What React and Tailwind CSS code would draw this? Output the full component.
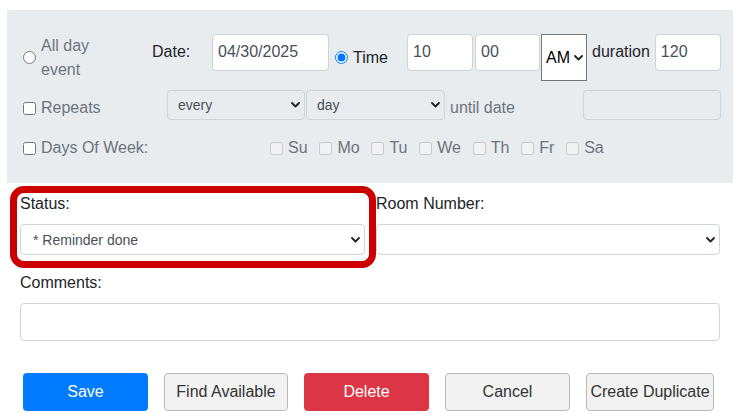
import React from "react";

function Chevron({ className }) {
  return (
    <svg
      className={"pointer-events-none absolute top-1/2 -translate-y-1/2 " + className}
      width="9"
      height="6"
      viewBox="0 0 9 6"
    >
      <path d="M1 1L4.5 4.5L8 1" fill="none" stroke="#222" strokeWidth="1.8" strokeLinecap="round" strokeLinejoin="round" />
    </svg>
  );
}

function Day({ label }) {
  return (
    <label className="flex items-center gap-[5px] text-[#6c757d]">
      <input type="checkbox" disabled className="m-0 h-[13px] w-[13px]" />
      <span>{label}</span>
    </label>
  );
}

export default function App() {
  return (
    <div className="min-h-screen bg-white font-['Liberation_Sans',Arial,sans-serif] text-[16px] leading-[24px] text-[#212529]">
      <div className="ml-[7px] mt-[10px] h-[173px] w-[726px] bg-[#e9ecef] pl-[16px] pt-[24px]">
        {/* Row 1 */}
        <div className="flex h-[47px] items-center">
          <div className="flex w-[129px] items-center">
            <input type="radio" name="when" className="m-0 h-[13px] w-[13px]" />
            <span className="ml-[5px] w-[70px] text-[#6c757d]">All day event</span>
          </div>
          <span className="mt-[6px] w-[60px] self-start">Date:</span>
          <input
            readOnly
            value="04/30/2025"
            className="h-[37px] w-[117px] self-start rounded-[4px] border border-[#ced4da] bg-white px-[5px] pb-[2px] text-[#495057] outline-none"
          />
          <div className="flex w-[78px] items-center">
            <input type="radio" name="when" defaultChecked className="m-0 ml-[6px] h-[13px] w-[13px]" />
            <span className="ml-[5px]">Time</span>
          </div>
          <input
            readOnly
            value="10"
            className="h-[37px] w-[66px] self-start rounded-[4px] border border-[#ced4da] bg-white px-[5px] pb-[2px] text-[#495057] outline-none"
          />
          <input
            readOnly
            value="00"
            className="ml-[2px] h-[37px] w-[65px] self-start rounded-[4px] border border-[#ced4da] bg-white px-[5px] pb-[2px] text-[#495057] outline-none"
          />
          <div className="relative ml-[1px] h-[47px] w-[46px]">
            <select className="h-full w-full appearance-none rounded-none border border-[#767676] bg-white pl-[4px] text-[16px] text-black outline-none">
              <option>AM</option>
            </select>
            <Chevron className="right-[4px]" />
          </div>
          <span className="ml-[5px] mt-[6px] self-start">duration</span>
          <input
            readOnly
            value="120"
            className="ml-[5px] h-[37px] w-[66px] self-start rounded-[4px] border border-[#ced4da] bg-white px-[5px] pb-[2px] text-[#495057] outline-none"
          />
        </div>

        {/* Row 2 */}
        <div className="mt-[9px] flex h-[30px] items-center">
          <div className="flex w-[144px] items-center self-stretch pt-[6px]">
            <input type="checkbox" className="m-0 h-[13px] w-[13px]" />
            <span className="ml-[5px] text-[#6c757d]">Repeats</span>
          </div>
          <div className="relative h-[30px] w-[138px]">
            <select className="h-full w-full appearance-none rounded-[4px] border border-[#ced4da] bg-[#e9ecef] pl-[10px] text-[14px] text-[#495057] outline-none">
              <option>every</option>
            </select>
            <Chevron className="right-[5px]" />
          </div>
          <div className="relative ml-[1px] h-[30px] w-[139px]">
            <select className="h-full w-full appearance-none rounded-[4px] border border-[#ced4da] bg-[#e9ecef] pl-[10px] text-[14px] text-[#495057] outline-none">
              <option>day</option>
            </select>
            <Chevron className="right-[5px]" />
          </div>
          <span className="ml-[5px] flex w-[133px] items-center self-stretch pt-[6px] text-[#6c757d]">until date</span>
          <input
            disabled
            className="h-[30px] w-[138px] rounded-[4px] border border-[#ced4da] bg-[#e9ecef] outline-none"
          />
        </div>

        {/* Row 3 */}
        <div className="mt-[16px] flex h-[24px] items-center">
          <div className="flex w-[247px] items-center">
            <input type="checkbox" className="m-0 h-[13px] w-[13px]" />
            <span className="ml-[5px] text-[#6c757d]">Days Of Week:</span>
          </div>
          <div className="flex items-center gap-[11.8px]">
            <Day label="Su" />
            <Day label="Mo" />
            <Day label="Tu" />
            <Day label="We" />
            <Day label="Th" />
            <Day label="Fr" />
            <Day label="Sa" />
          </div>
        </div>
      </div>

      <div className="pl-[20px] pr-[25px]">
        <div className="mt-[9px] flex">
          <div className="relative w-[345px]">
            <div className="mb-[8px]">Status:</div>
            <div className="relative h-[31px]">
              <select className="h-full w-full appearance-none rounded-[4px] border border-[#ced4da] bg-white pl-[12px] text-[14px] text-[#495057] outline-none">
                <option>* Reminder done</option>
              </select>
              <Chevron className="right-[5px]" />
            </div>
            <div className="pointer-events-none absolute -bottom-[13px] -left-[10px] -right-[11px] -top-[6px] rounded-[14px] border-[7px] border-[#cc0000]"></div>
          </div>
          <div className="ml-[11px] flex-1">
            <div className="mb-[8px]">Room Number:</div>
            <div className="relative h-[31px]">
              <select className="h-full w-full appearance-none rounded-[4px] border border-[#ced4da] bg-white pl-[12px] text-[14px] text-[#495057] outline-none">
                <option></option>
              </select>
              <Chevron className="right-[5px]" />
            </div>
          </div>
        </div>

        <div className="mt-[16px]">
          <div className="mb-[8px]">Comments:</div>
          <input className="h-[38px] w-full rounded-[4px] border border-[#ced4da] bg-white px-[12px] outline-none" />
        </div>

        <div className="ml-[3px] mt-[32px] flex gap-[16px]">
          <button className="h-[38px] w-[125px] rounded-[4px] bg-[#007bff] text-white">Save</button>
          <button className="h-[38px] w-[124px] rounded-[4px] border border-[#b4b9be] bg-[#f2f2f2] text-[#333]">Find Available</button>
          <button className="h-[38px] w-[125px] rounded-[4px] bg-[#dc3545] text-white">Delete</button>
          <button className="h-[38px] w-[125px] rounded-[4px] border border-[#b4b9be] bg-[#f2f2f2] text-[#333]">Cancel</button>
          <button className="h-[38px] w-[128px] rounded-[4px] border border-[#b4b9be] bg-[#f2f2f2] px-0 text-[#333]">Create Duplicate</button>
        </div>
      </div>
    </div>
  );
}
